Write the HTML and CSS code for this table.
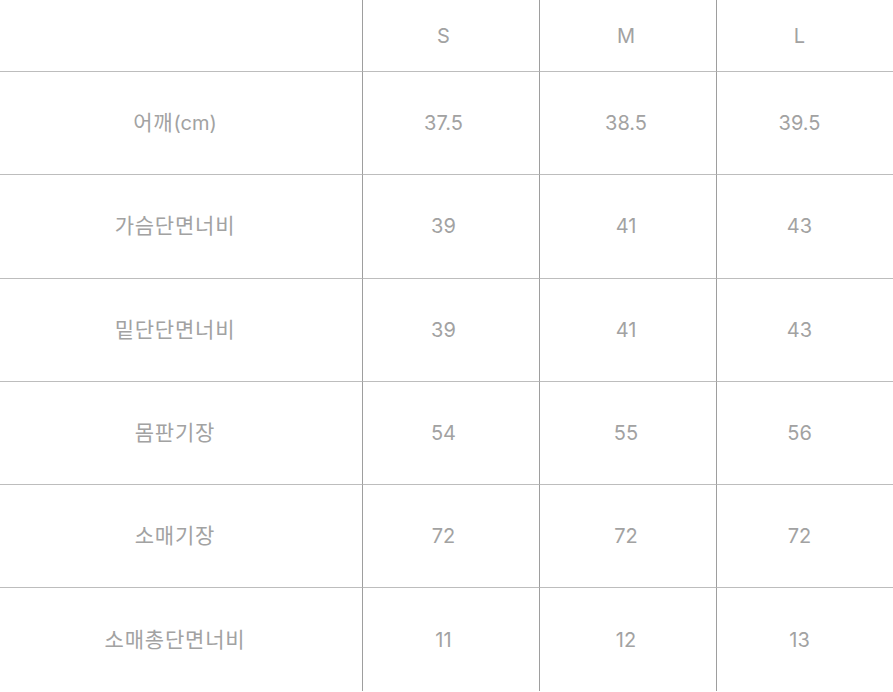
FILE: index.html
```html
<!DOCTYPE html>
<html lang="ko">
<head>
<meta charset="utf-8">
<title>사이즈</title>
<link rel="stylesheet" href="styles.css">
</head>
<body>
<div class="size-table">
  <div class="cell c1 head"></div>
  <div class="cell c2 head">S</div>
  <div class="cell c3 head">M</div>
  <div class="cell c4 head">L</div>

  <div class="cell c1"><span class="ko">어깨</span>(cm)</div>
  <div class="cell c2">37.5</div>
  <div class="cell c3">38.5</div>
  <div class="cell c4">39.5</div>

  <div class="cell c1"><span class="ko">가슴단면너비</span></div>
  <div class="cell c2">39</div>
  <div class="cell c3">41</div>
  <div class="cell c4">43</div>

  <div class="cell c1"><span class="ko">밑단단면너비</span></div>
  <div class="cell c2">39</div>
  <div class="cell c3">41</div>
  <div class="cell c4">43</div>

  <div class="cell c1"><span class="ko">몸판기장</span></div>
  <div class="cell c2">54</div>
  <div class="cell c3">55</div>
  <div class="cell c4">56</div>

  <div class="cell c1"><span class="ko">소매기장</span></div>
  <div class="cell c2">72</div>
  <div class="cell c3">72</div>
  <div class="cell c4">72</div>

  <div class="cell c1"><span class="ko">소매총단면너비</span></div>
  <div class="cell c2">11</div>
  <div class="cell c3">12</div>
  <div class="cell c4">13</div>
</div>
</body>
</html>
```
FILE: styles.css
```css
html, body {
  margin: 0;
  padding: 0;
  background: #ffffff;
}

.size-table {
  display: grid;
  grid-template-columns: 363px 177px 177px 176px;
  grid-template-rows: 71px repeat(6, 103.3px);
  font-family: Inter, "Noto Sans CJK KR", sans-serif;
  font-size: 20px;
  color: #a2a2a2;
}

.cell {
  box-sizing: border-box;
  display: flex;
  align-items: center;
  justify-content: center;
  border-top: 1px solid #bdbdbd;
  line-height: 1;
  white-space: nowrap;
}

.cell.head {
  border-top: none;
}

.c1, .c2, .c3 {
  border-right: 1px solid #9e9e9e;
}

.c1 { padding-right: 12px; }
.c2 { padding-right: 15px; }
.c3 { padding-right: 4px; }
.c4 { padding-right: 11px; }

.head { padding-top: 1px; }

.ko {
  font-family: "Noto Sans CJK KR", sans-serif;
  font-size: 21px;
  letter-spacing: 0.8px;
  padding-bottom: 3px;
}
```
